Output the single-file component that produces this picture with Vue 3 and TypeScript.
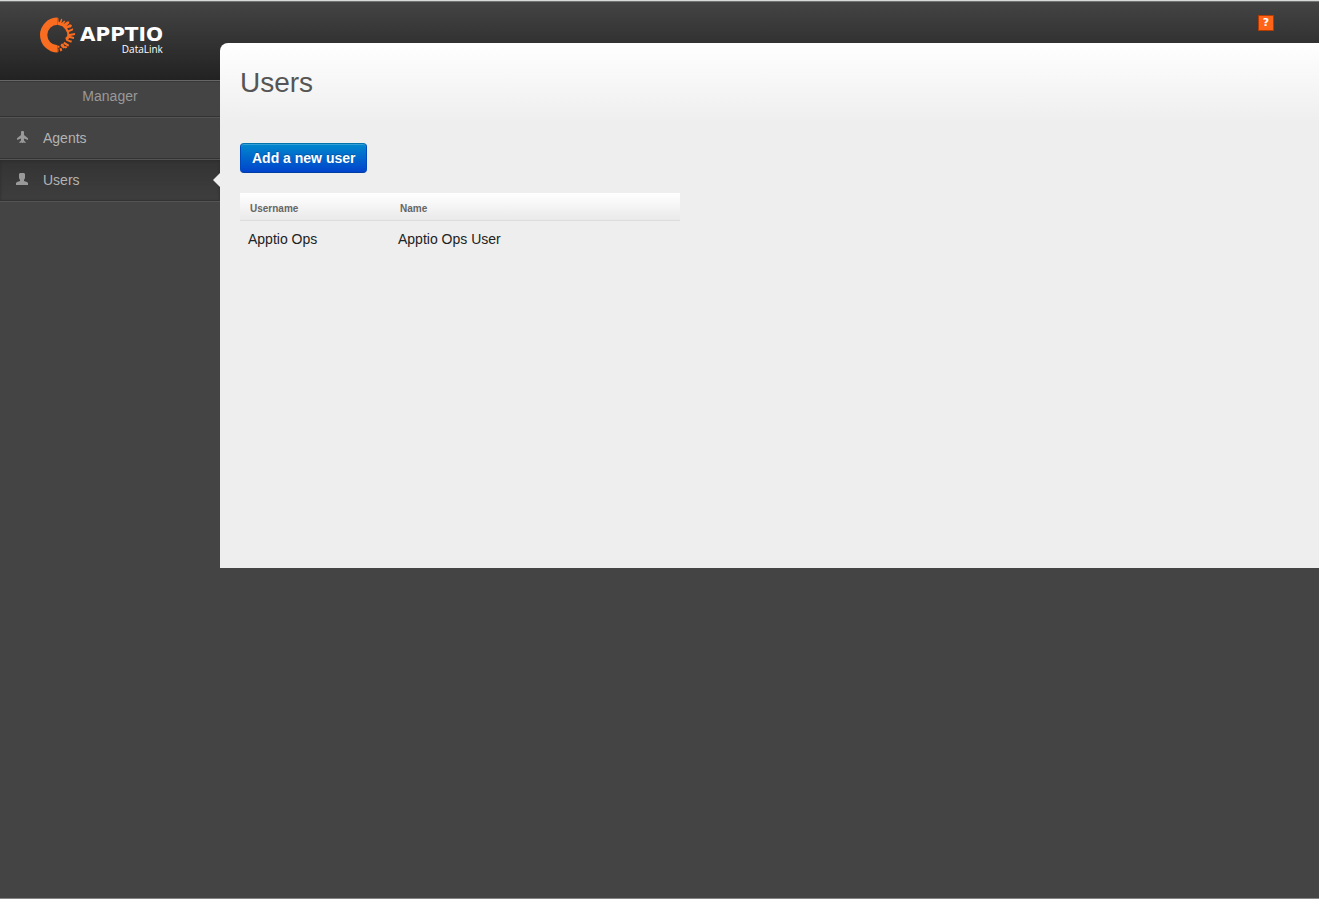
<script setup lang="ts">
import { ref } from 'vue'

interface NavItem {
  id: string
  label: string
  icon: string
}

interface User {
  username: string
  name: string
}

const navItems: NavItem[] = [
  {
    id: 'agents',
    label: 'Agents',
    icon: 'M5 .6L6 0H7L8 .6V4L12 7.2V9L8 7.4V9.6L9.6 11V12L7 11.4V12H6V11.4L3.4 12V11L5 9.6V7.4L1 9V7.2L5 4Z',
  },
  {
    id: 'users',
    label: 'Users',
    icon: 'M3 1L4 0H8L9 1V5L8 7V8L11 9L12 10V12H0V10L1 9L4 8V7L3 5Z',
  },
]

const active = ref('users')

const users: User[] = [{ username: 'Apptio Ops', name: 'Apptio Ops User' }]
</script>

<template>
  <div class="app">
    <header class="topbar">
      <a href="#" class="brand" aria-label="Apptio DataLink">
        <svg class="mark" viewBox="0 0 36 36" aria-hidden="true">
          <path d="M18 0A18 18 0 0 0 18 36V28.5A10.5 10.5 0 1 1 18 7.5Z" />
          <path
            d="M18 0L19 1V4L20 5L22 1L23 2L22 6L25 3L26 4L24 7L28 4H30V6L27 9L31 7L33 8L32 10L28 11L29 13L34 11V13L30 15V17L36 16V18L31 19L35 20V22L30 21L29 23L33 24L32 26L27 24L26 21L28 19V16L26 12L23 9L18 7.5ZM25 25L30 28L29 30L24 27ZM22 27H24L26 31L24 32L21 29ZM18 29H20V31H18ZM20 32L22 31L23 34L21 35ZM27 29L28 31L26 32L25 30ZM18 32H19V35L18 36Z"
          />
        </svg>
        <span class="names">
          <span class="company">APPTIO</span>
          <span class="product">DataLink</span>
        </span>
      </a>
      <button type="button" class="help" aria-label="Help">?</button>
    </header>

    <nav class="sidebar">
      <h2 class="section">Manager</h2>
      <ul>
        <li v-for="item in navItems" :key="item.id">
          <a href="#" :class="{ active: active === item.id }" @click.prevent="active = item.id">
            <svg viewBox="0 0 12 12" aria-hidden="true"><path :d="item.icon" /></svg>
            <span>{{ item.label }}</span>
          </a>
        </li>
      </ul>
    </nav>

    <main class="content">
      <h1>Users</h1>
      <button type="button" class="add">Add a new user</button>
      <table>
        <thead>
          <tr>
            <th class="col-username">Username</th>
            <th>Name</th>
          </tr>
        </thead>
        <tbody>
          <tr v-for="user in users" :key="user.username">
            <td>{{ user.username }}</td>
            <td>{{ user.name }}</td>
          </tr>
        </tbody>
      </table>
    </main>
  </div>
</template>

<style>
body {
  background: #444;
}
</style>

<style scoped>
.app {
  box-sizing: border-box;
  min-height: 100vh;
  display: grid;
  grid-template-columns: 220px 1fr;
  grid-template-rows: 43px 37px 1fr;
  border-bottom: 1px solid #858585;
  font-family: "Liberation Sans", Arial, sans-serif;
  font-size: 14px;
  line-height: 20px;
}

.topbar {
  grid-column: 1 / 3;
  grid-row: 1 / 3;
  display: flex;
  justify-content: space-between;
  align-items: flex-start;
  box-sizing: border-box;
  border-top: 1px solid #d5d9d7;
  padding: 14px 45px 0 40px;
  background: linear-gradient(#444, #222);
  box-shadow: inset 0 1px #727272;
}

.brand {
  display: flex;
  gap: 5px;
  padding-top: 2px;
  color: #fff;
  text-decoration: none;
}

.mark {
  width: 35px;
  height: 36px;
  fill: #fa6d20;
}

.names {
  display: flex;
  flex-direction: column;
  padding-top: 8px;
}

.company {
  font: bold 20px/18px "DejaVu Sans", sans-serif;
}

.product {
  font: 10px/12px "Open Sans", sans-serif;
  text-align: right;
}

.help {
  box-sizing: border-box;
  width: 16px;
  height: 16px;
  padding: 0;
  border: 1px solid #b43c00;
  background: #ff6418;
  color: #fff;
  font: bold 11px/14px "DejaVu Sans", sans-serif;
}

.sidebar {
  grid-column: 1;
  grid-row: 3;
}

.section {
  box-sizing: border-box;
  height: 37px;
  margin: 0;
  padding-top: 5px;
  border-top: 1px solid #666;
  border-bottom: 1px solid #333;
  box-shadow: inset 0 1px #383838;
  color: #999;
  font-size: 14px;
  line-height: 20px;
  font-weight: normal;
  text-align: center;
}

.sidebar ul {
  margin: 0;
  padding: 0;
  border-bottom: 1px solid #545454;
  list-style: none;
}

.sidebar a {
  position: relative;
  box-sizing: border-box;
  height: 42px;
  display: flex;
  align-items: center;
  gap: 15px;
  padding-left: 16px;
  border-top: 1px solid #545454;
  border-bottom: 1px solid #333;
  color: #b3b3b3;
  text-decoration: none;
}

.sidebar svg {
  width: 12px;
  height: 12px;
  margin-bottom: 2px;
  fill: #999;
}

.sidebar a.active {
  background: linear-gradient(#333, #3e3e3e);
  box-shadow: inset 0 1px 3px #2c2c2c;
}

.sidebar a.active::after {
  content: "";
  position: absolute;
  right: 0;
  top: 13px;
  border: 7px solid transparent;
  border-left-width: 0;
  border-right-color: #eee;
}

.content {
  grid-column: 2;
  grid-row: 2 / 4;
  align-self: start;
  box-sizing: border-box;
  min-height: 525px;
  padding: 20px;
  border-top-left-radius: 8px;
  background: linear-gradient(#fff, #eee 80px);
}

h1 {
  margin: 0 0 40px;
  color: #555;
  font-size: 28px;
  line-height: 40px;
  font-weight: normal;
}

.add {
  display: block;
  height: 30px;
  margin-bottom: 20px;
  padding: 0 11px;
  border: 1px solid;
  border-color: #0074ad #0048bd #003da5;
  border-radius: 4px;
  background: linear-gradient(#08c, #04c);
  box-shadow: inset 0 1px rgba(255, 255, 255, 0.2);
  color: #fff;
  font: bold 14px/20px "Liberation Sans", Arial, sans-serif;
  text-shadow: 0 -1px rgba(0, 0, 0, 0.25);
}

table {
  width: 440px;
  max-width: 100%;
  border-spacing: 0;
  table-layout: fixed;
  color: #222;
}

thead {
  background: linear-gradient(#fff, #e9e9e9);
}

th {
  height: 20px;
  padding: 6px 10px 1px;
  border-bottom: 1px solid #ddd;
  color: #666;
  font-size: 10px;
  text-align: left;
}

.col-username {
  width: 130px;
}

td {
  padding: 8px;
}
</style>
